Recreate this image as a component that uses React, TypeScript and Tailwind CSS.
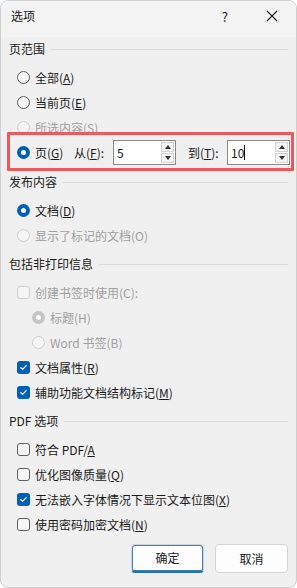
import React from 'react';

const Radio = ({ checked = false, disabled = false }: { checked?: boolean; disabled?: boolean }) => {
  if (checked && !disabled) {
    return (
      <span className="w-[13px] h-[13px] rounded-full bg-[#005fb8] flex items-center justify-center shrink-0">
        <span className="w-[5px] h-[5px] rounded-full bg-white" />
      </span>
    );
  }
  if (checked && disabled) {
    return (
      <span className="w-[13px] h-[13px] rounded-full bg-[#c5c5c5] flex items-center justify-center shrink-0">
        <span className="w-[5px] h-[5px] rounded-full bg-white" />
      </span>
    );
  }
  return (
    <span
      className={`w-[13px] h-[13px] rounded-full border shrink-0 ${
        disabled ? 'border-[#cfcfcf] bg-[#f5f5f5]' : 'border-[#5f5f5f] bg-[#f7f7f7]'
      }`}
    />
  );
};

const Check = ({ checked = false, disabled = false }: { checked?: boolean; disabled?: boolean }) =>
  checked ? (
    <span className="w-[13px] h-[13px] rounded-[3px] bg-[#005fb8] flex items-center justify-center shrink-0">
      <svg width="9" height="9" viewBox="0 0 9 9" fill="none">
        <path d="M1.8 4.7 L3.6 6.4 L7.2 2.6" stroke="white" strokeWidth="1.2" strokeLinecap="round" strokeLinejoin="round" />
      </svg>
    </span>
  ) : (
    <span
      className={`w-[13px] h-[13px] rounded-[3px] border shrink-0 ${
        disabled ? 'border-[#cfcfcf] bg-[#f5f5f5]' : 'border-[#5f5f5f] bg-[#f7f7f7]'
      }`}
    />
  );

const Key = ({ k }: { k: string }) => <span className="underline underline-offset-1">{k}</span>;

const Header = ({ title }: { title: string }) => (
  <div className="h-[24px] flex items-center pl-[8px] pr-[8px]">
    <span className="text-[#1a1a1a] whitespace-nowrap">{title}</span>
    <div className="flex-1 h-px bg-[#dcdcdc] ml-[6px]" />
  </div>
);

const Row = ({
  control,
  children,
  disabled = false,
  indent = false,
}: {
  control: React.ReactNode;
  children: React.ReactNode;
  disabled?: boolean;
  indent?: boolean;
}) => (
  <div className={`h-[25px] flex items-center gap-[5px] ${indent ? 'pl-[31px]' : 'pl-[16px]'} ${disabled ? 'text-[#a0a0a0]' : 'text-[#1a1a1a]'}`}>
    {control}
    <span className="whitespace-nowrap">{children}</span>
  </div>
);

const Spin = ({ value, caret = false }: { value: string; caret?: boolean }) => (
  <div className="flex h-[25px] border border-[#8a8a8a] bg-white shrink-0">
    <div className="w-[47px] flex items-center pl-[3px] text-[#1a1a1a]">
      {value}
      {caret && <span className="w-px h-[15px] bg-black" />}
    </div>
    <div className="w-[14px] flex flex-col justify-center gap-[1px] pr-[1px]">
      <div className="h-[10px] border border-[#d4d4d4] bg-[#f4f4f4] flex items-center justify-center">
        <svg width="6" height="4" viewBox="0 0 6 4"><path d="M0 4 L3 0 L6 4 Z" fill="#333" /></svg>
      </div>
      <div className="h-[10px] border border-[#d4d4d4] bg-[#f4f4f4] flex items-center justify-center">
        <svg width="6" height="4" viewBox="0 0 6 4"><path d="M0 0 L6 0 L3 4 Z" fill="#333" /></svg>
      </div>
    </div>
  </div>
);

export default function App() {
  return (
    <div
      className="w-[297px] h-[588px] bg-[#f0f0f0] rounded-[8px] border border-[#cfcfcf] overflow-hidden flex flex-col text-[12px] leading-none select-none"
      style={{ fontFamily: '"Noto Sans CJK SC", "Noto Sans", sans-serif' }}
    >
      {/* Title bar */}
      <div className="h-[36px] flex items-center pl-[10px] bg-[#f3f3f3] text-[#1a1a1a] shrink-0">
        <span className="-mt-[6px]">选项</span>
        <div className="flex-1" />
        <span className="-mt-[6px] mr-[38px] text-[13px]">?</span>
        <svg className="-mt-[6px] mr-[18px]" width="12" height="12" viewBox="0 0 12 12">
          <path d="M1 1 L11 11 M11 1 L1 11" stroke="#1a1a1a" strokeWidth="1.1" />
        </svg>
      </div>

      {/* 页范围 */}
      <Header title="页范围" />
      <div className="pt-[4px] pb-[5px]">
        <Row control={<Radio />}>
          全部(<Key k="A" />)
        </Row>
        <Row control={<Radio />}>
          当前页(<Key k="E" />)
        </Row>
        <Row control={<Radio disabled />} disabled>
          所选内容(S)
        </Row>
        <div className="relative h-[25px] flex items-center pl-[16px] text-[#1a1a1a] whitespace-nowrap">
          <div className="absolute left-[6px] right-[2px] -top-[8px] -bottom-[6px] border-[3px] border-[#ec5a5f] rounded-[1px]" />
          <Radio checked />
          <span className="ml-[5px] w-[30px]">
            页(<Key k="G" />)
          </span>
          <span className="ml-[9px] w-[30px]">
            从(<Key k="F" />):
          </span>
          <div className="ml-[9px]">
            <Spin value="5" />
          </div>
          <span className="ml-[12px] w-[30px]">
            到(<Key k="T" />):
          </span>
          <div className="ml-[9px]">
            <Spin value="10" caret />
          </div>
        </div>
      </div>

      {/* 发布内容 */}
      <Header title="发布内容" />
      <div className="pt-[4px]">
        <Row control={<Radio checked />}>
          文档(<Key k="D" />)
        </Row>
        <Row control={<Radio disabled />} disabled>
          显示了标记的文档(O)
        </Row>
      </div>

      {/* 包括非打印信息 */}
      <div className="mt-[4px]">
        <Header title="包括非打印信息" />
      </div>
      <div className="pt-[4px]">
        <Row control={<Check disabled />} disabled>
          创建书签时使用(C):
        </Row>
        <Row control={<Radio checked disabled />} disabled indent>
          标题(H)
        </Row>
        <Row control={<Radio disabled />} disabled indent>
          Word 书签(B)
        </Row>
        <Row control={<Check checked />}>
          文档属性(<Key k="R" />)
        </Row>
        <Row control={<Check checked />}>
          辅助功能文档结构标记(<Key k="M" />)
        </Row>
      </div>

      {/* PDF 选项 */}
      <div className="mt-[4px]">
        <Header title="PDF 选项" />
      </div>
      <div className="pt-[4px]">
        <Row control={<Check />}>
          符合 PDF/<Key k="A" />
        </Row>
        <Row control={<Check />}>
          优化图像质量(<Key k="Q" />)
        </Row>
        <Row control={<Check checked />}>
          无法嵌入字体情况下显示文本位图(<Key k="X" />)
        </Row>
        <Row control={<Check />}>
          使用密码加密文档(<Key k="N" />)
        </Row>
      </div>

      {/* Buttons */}
      <div className="mt-[7px] flex justify-end gap-[11px] pr-[8px]">
        <button className="w-[73px] h-[29px] rounded-[4px] bg-[#fdfdfd] border border-[#c9d6e3] border-b-[#2b6fb0] border-b-[2px] text-[#1a1a1a] shadow-[0_0_0_1px_#3d7cbf_inset]">
          确定
        </button>
        <button className="w-[73px] h-[29px] rounded-[4px] bg-[#fdfdfd] border border-[#d5d5d5] text-[#1a1a1a]">
          取消
        </button>
      </div>
    </div>
  );
}
